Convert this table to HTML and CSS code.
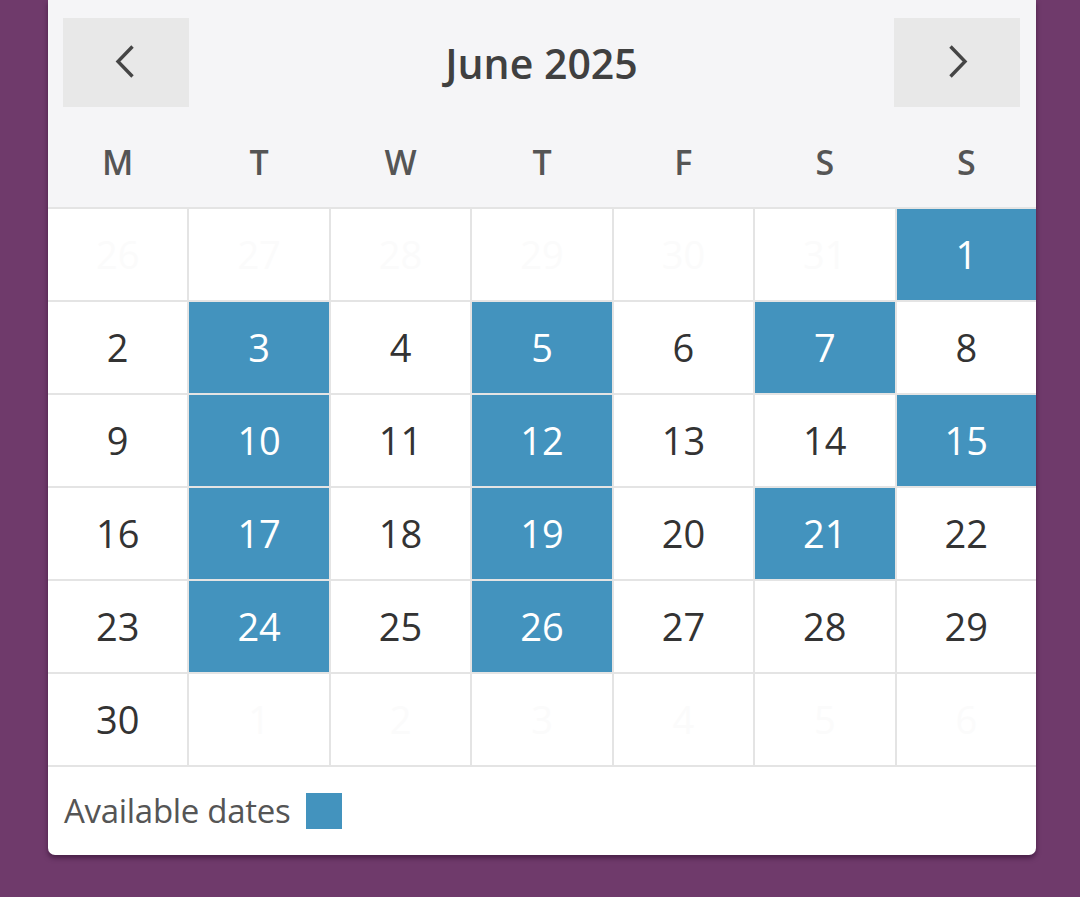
FILE: index.html
```html
<!DOCTYPE html>
<html lang="en">
<head>
<meta charset="utf-8">
<title>June 2025</title>
<link rel="stylesheet" href="styles.css">
</head>
<body>
<div class="card">
  <div class="head">
    <div class="nav">
      <button class="navbtn" aria-label="Previous month">
        <svg width="30" height="40" viewBox="0 0 30 40"><path d="M21.5 4.5 L7 19.5 L21.5 34.5" fill="none" stroke="#454545" stroke-width="3.4"/></svg>
      </button>
      <div class="title">June 2025</div>
      <button class="navbtn" aria-label="Next month">
        <svg width="30" height="40" viewBox="0 0 30 40"><path d="M8.5 4.5 L23 19.5 L8.5 34.5" fill="none" stroke="#454545" stroke-width="3.4"/></svg>
      </button>
    </div>
    <div class="dows">
      <div>M</div><div>T</div><div>W</div><div>T</div><div>F</div><div>S</div><div>S</div>
    </div>
  </div>
  <div class="grid">
    <div class="cell other">26</div><div class="cell other">27</div><div class="cell other">28</div><div class="cell other">29</div><div class="cell other">30</div><div class="cell other">31</div><div class="cell avail">1</div>
    <div class="cell">2</div><div class="cell avail">3</div><div class="cell">4</div><div class="cell avail">5</div><div class="cell">6</div><div class="cell avail">7</div><div class="cell">8</div>
    <div class="cell">9</div><div class="cell avail">10</div><div class="cell">11</div><div class="cell avail">12</div><div class="cell">13</div><div class="cell">14</div><div class="cell avail">15</div>
    <div class="cell">16</div><div class="cell avail">17</div><div class="cell">18</div><div class="cell avail">19</div><div class="cell">20</div><div class="cell avail">21</div><div class="cell">22</div>
    <div class="cell">23</div><div class="cell avail">24</div><div class="cell">25</div><div class="cell avail">26</div><div class="cell">27</div><div class="cell">28</div><div class="cell">29</div>
    <div class="cell">30</div><div class="cell other">1</div><div class="cell other">2</div><div class="cell other">3</div><div class="cell other">4</div><div class="cell other">5</div><div class="cell other">6</div>
  </div>
  <div class="foot">
    <span class="legend-text">Available dates</span>
    <span class="legend-box"></span>
  </div>
</div>
</body>
</html>
```
FILE: styles.css
```css
html, body {
  margin: 0;
  padding: 0;
}
body {
  background: #6f3a6b;
  font-family: "Open Sans", "Noto Sans", sans-serif;
  height: 897px;
  overflow: hidden;
}
.card {
  margin-left: 48px;
  width: 988px;
  background: #ffffff;
  border-radius: 0 0 7px 7px;
  box-shadow: 0 3px 5px rgba(40, 10, 40, 0.55);
  overflow: hidden;
}
.head {
  background: #f5f5f7;
}
.nav {
  display: flex;
  align-items: center;
  justify-content: space-between;
  padding: 18px 16px 0 15px;
}
.navbtn {
  width: 126px;
  height: 89px;
  border: none;
  background: #e8e8e8;
  padding: 0;
  display: flex;
  align-items: center;
  justify-content: center;
  margin: 0;
}
.navbtn svg {
  display: block;
  margin-top: -2px;
}
.title {
  font-size: 41px;
  font-weight: 600;
  color: #404040;
  letter-spacing: 0;
}
.dows {
  display: grid;
  grid-template-columns: repeat(7, 1fr);
  column-gap: 2px;
  height: 100px;
  align-items: center;
  font-size: 34px;
  font-weight: 600;
  color: #555555;
  text-align: center;
}
.dows div {
  padding-top: 10px;
}
.grid {
  display: grid;
  grid-template-columns: repeat(7, 1fr);
  grid-auto-rows: 91px;
  gap: 2px;
  background: #e4e4e4;
  padding: 2px 0;
}
.cell {
  background: #ffffff;
  display: flex;
  align-items: center;
  justify-content: center;
  font-size: 38px;
  color: #333333;
  padding-bottom: 2px;
}
.cell.other {
  color: #fbfbfb;
}
.cell.avail {
  background: #4393be;
  color: #ffffff;
}
.foot {
  height: 88px;
  display: flex;
  align-items: center;
  padding-left: 16px;
  gap: 16px;
}
.legend-text {
  font-size: 33px;
  color: #555555;
  letter-spacing: -0.3px;
  padding-bottom: 2px;
}
.legend-box {
  width: 36px;
  height: 36px;
  background: #4393be;
}
```
